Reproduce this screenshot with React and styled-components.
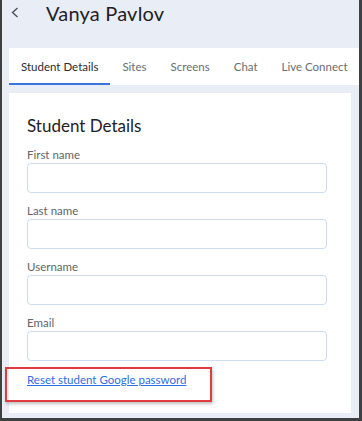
import React from "react";
import styled, { createGlobalStyle } from "styled-components";

const Global = createGlobalStyle`
  html, body { margin: 0; padding: 0; }
  body { font-family: Lato, "Noto Sans", sans-serif; background: #fff; }
  * { box-sizing: border-box; }
`;

const Frame = styled.div`
  width: 362px;
  height: 421px;
  background: #e9edf5;
  border-left: 2px solid #3f4042;
  border-right: 3px solid #3f4042;
  border-bottom: 3px solid #3f4042;
  overflow: hidden;
  display: flex;
  flex-direction: column;
`;

const Header = styled.div`
  height: 48px;
  display: flex;
  align-items: flex-start;
  padding: 1px 0 0 9px;
  gap: 21px;
`;

const Back = styled.button`
  border: 0;
  background: none;
  padding: 0;
  margin-top: 6px;
  width: 14px;
  height: 12px;
  display: flex;
  cursor: pointer;
`;

const Title = styled.h1`
  margin: 0;
  font-size: 20px;
  line-height: 24px;
  font-weight: 400;
  color: #1f2126;
  letter-spacing: 0.2px;
`;

const TabBar = styled.nav`
  margin-left: 7px;
  height: 37px;
  background: #fff;
  display: flex;
  align-items: stretch;
`;

const Tab = styled.div`
  padding: 0 12px;
  display: flex;
  align-items: center;
  font-size: 11.5px;
  color: ${(p) => (p.$active ? "#2a2c31" : "#6a6d73")};
  border-bottom: 2px solid ${(p) => (p.$active ? "#3a74dc" : "transparent")};
  padding-top: 2px;
  white-space: nowrap;
`;

const Card = styled.section`
  margin: 8px 0 0 7px;
  width: 342px;
  height: 320px;
  background: #fff;
  padding: 23px 18px 0;
  display: flex;
  flex-direction: column;
`;

const CardTitle = styled.h2`
  margin: 0 0 12px;
  font-size: 17px;
  line-height: 20px;
  font-weight: 400;
  color: #1f2126;
`;

const Field = styled.label`
  display: flex;
  flex-direction: column;
  margin-bottom: 11px;
`;

const Label = styled.span`
  font-size: 11.5px;
  line-height: 14px;
  color: #62656b;
  margin-bottom: 1px;
`;

const Input = styled.input`
  width: 300px;
  height: 30px;
  border: 1px solid #cfdcf0;
  border-radius: 4px;
  background: #fff;
  outline: none;
  font: inherit;
  padding: 0 8px;
`;

const Highlight = styled.div`
  position: relative;
  margin-top: 1px;
  align-self: flex-start;
  &::after {
    content: "";
    position: absolute;
    left: -22px;
    top: -6px;
    width: 203px;
    height: 31px;
    border: 2px solid #e23b3f;
    box-shadow: 1px 2px 3px rgba(0, 0, 0, 0.25);
    pointer-events: none;
  }
`;

const Link = styled.a`
  font-size: 11.5px;
  line-height: 14px;
  color: #2f6ede;
  text-decoration: underline;
  display: block;
`;

const fields = ["First name", "Last name", "Username", "Email"];
const tabs = ["Student Details", "Sites", "Screens", "Chat", "Live Connect"];

export default function App() {
  return (
    <>
      <Global />
      <Frame>
        <Header>
          <Back aria-label="Back">
            <svg width="8" height="11" viewBox="0 0 8 11">
              <polyline points="6.5,1 1.5,5.5 6.5,10" fill="none" stroke="#4b5060" strokeWidth="1.4" />
            </svg>
          </Back>
          <Title>Vanya Pavlov</Title>
        </Header>
        <TabBar>
          {tabs.map((t, i) => (
            <Tab key={t} $active={i === 0}>{t}</Tab>
          ))}
        </TabBar>
        <Card>
          <CardTitle>Student Details</CardTitle>
          {fields.map((f) => (
            <Field key={f}>
              <Label>{f}</Label>
              <Input type="text" />
            </Field>
          ))}
          <Highlight>
            <Link href="#">Reset student Google password</Link>
          </Highlight>
        </Card>
      </Frame>
    </>
  );
}
